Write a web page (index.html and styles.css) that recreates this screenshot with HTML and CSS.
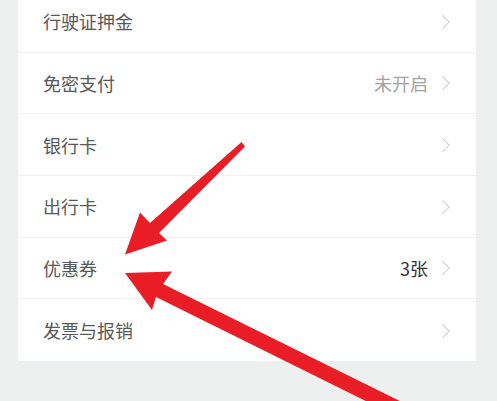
FILE: index.html
```html
<!DOCTYPE html>
<html lang="zh">
<head>
<meta charset="utf-8">
<link rel="stylesheet" href="styles.css">
</head>
<body>
<div class="page">
  <ul class="card">
    <li class="row"><span class="label">行驶证押金</span><span class="right"><span class="chev"></span></span></li>
    <li class="row"><span class="label">免密支付</span><span class="right"><span class="value muted">未开启</span><span class="chev"></span></span></li>
    <li class="row"><span class="label">银行卡</span><span class="right"><span class="chev"></span></span></li>
    <li class="row"><span class="label">出行卡</span><span class="right"><span class="chev"></span></span></li>
    <li class="row"><span class="label">优惠券</span><span class="right"><span class="value dark">3张</span><span class="chev"></span></span></li>
    <li class="row last"><span class="label">发票与报销</span><span class="right"><span class="chev"></span></span></li>
  </ul>
</div>
<svg class="arrows" width="497" height="401" viewBox="0 0 497 401" xmlns="http://www.w3.org/2000/svg">
  <polygon fill="#e91d25" points="241.5,142 245,146.5 159,233 167,240.5 125,254.5 140,212.5 150,223"/>
  <polygon fill="#e91d25" points="125,273 172,271.5 163,284 422,412 392,414 156,297 152,310"/>
</svg>
</body>
</html>
```
FILE: styles.css
```css
html, body {
  margin: 0;
  padding: 0;
  background: #eef0f0;
  overflow: hidden;
}
body {
  width: 497px;
  height: 401px;
  position: relative;
  font-family: "Noto Sans CJK SC", "Noto Sans", sans-serif;
}
.page {
  padding: 0 21.5px 0 17.5px;
}
.card {
  list-style: none;
  margin: -9px 0 0 0;
  padding: 0;
  background: #ffffff;
}
.row {
  height: 60.7px;
  border-bottom: 1px solid #f0f1f1;
  display: flex;
  align-items: center;
  justify-content: space-between;
  padding: 0 25px 0 25.5px;
}
.row.last {
  height: 61.7px;
  border-bottom: none;
}
.label {
  font-size: 18px;
  color: #585858;
}
.right {
  display: flex;
  align-items: center;
}
.value {
  font-size: 18px;
  margin-right: 10px;
}
.muted {
  color: #a3a3a3;
}
.dark {
  color: #333333;
}
.chev {
  width: 8.5px;
  height: 8.5px;
  border-right: 1.6px solid #cdcdcd;
  border-top: 1.6px solid #cdcdcd;
  transform: rotate(45deg);
  margin-right: 3px;
}
.arrows {
  position: absolute;
  left: 0;
  top: 0;
}
```
